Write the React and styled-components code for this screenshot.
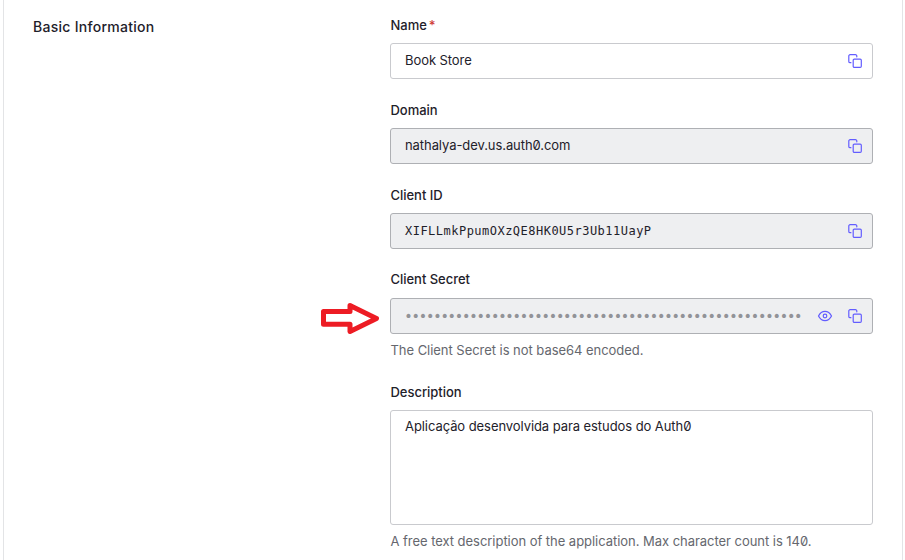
import React from "react";
import styled, { createGlobalStyle, css } from "styled-components";

const GlobalStyle = createGlobalStyle`
  * { box-sizing: border-box; }
  body {
    margin: 0;
    background: #fff;
    overflow: hidden;
    font-family: Inter, "Liberation Sans", sans-serif;
    font-feature-settings: "zero";
    color: #1e212a;
  }
`;

const Panel = styled.main`
  display: flex;
  width: 900px;
  height: 560px;
  margin-left: 3px;
  border: solid #e3e4e6;
  border-width: 0 1px;
  overflow: hidden;
`;

const SectionTitle = styled.h2`
  flex: 0 0 357px;
  margin: 17px 0 0 29px;
  font-size: 14px;
  line-height: 20px;
  font-weight: 500;
  letter-spacing: 0.28px;
`;

const Form = styled.form`
  flex: 0 0 483px;
  padding-top: 15px;
`;

const Field = styled.div`
  position: relative;
  margin-bottom: ${(p) => p.$gap}px;
`;

const Label = styled.label`
  display: block;
  height: 20px;
  margin-bottom: ${(p) => p.$space || 8}px;
  padding-left: 0.5px;
  font-size: 13px;
  line-height: 20px;
  font-weight: 500;
  letter-spacing: -0.03px;
`;

const Required = styled.span`
  margin-left: 2px;
  color: #d03c38;
`;

const Control = styled.div`
  display: flex;
  align-items: center;
  height: 36px;
  padding: 0 9px 0 14px;
  border: 1px solid ${(p) => (p.$readOnly ? "#aeb0b4" : "#c9cace")};
  border-radius: 3px;
  background: ${(p) => (p.$readOnly ? "#eeeff1" : "#fff")};
`;

const Value = styled.span`
  flex: 1;
  padding-bottom: 2px;
  font-size: 13px;
  line-height: 20px;
  white-space: nowrap;
  letter-spacing: -0.07px;
  ${(p) =>
    p.$mono &&
    css`
      padding-bottom: 0;
      font-family: "DejaVu Sans Mono", "Liberation Mono", monospace;
      font-size: 12px;
      letter-spacing: 0.48px;
    `}
`;

const Secret = styled.span`
  flex: 1;
  margin-left: -0.7px;
  font-family: "DejaVu Sans Mono", monospace;
  font-size: 14px;
  line-height: 20px;
  letter-spacing: -1.21px;
  white-space: nowrap;
  color: #929398;
`;

const IconButton = styled.button`
  display: flex;
  margin: 0 0 0 14px;
  padding: 0;
  border: 0;
  background: none;
  color: #635dff;
`;

const TextArea = styled.div`
  height: 115px;
  padding: 5px 14px;
  border: 1px solid #c9cace;
  border-radius: 3px;
  display: flex;
  align-items: flex-start;
`;

const Hint = styled.p`
  margin: 6px 0 0 0.5px;
  height: 20px;
  font-size: 13px;
  line-height: 20px;
  color: #65676e;
  letter-spacing: -0.04px;
`;

const Arrow = styled.svg`
  position: absolute;
  left: -72px;
  top: 23px;
`;

const CopyIcon = () => (
  <svg width="16" height="16" viewBox="0 0 16 16" fill="none" stroke="currentColor" strokeWidth="1.2" strokeLinecap="round" strokeLinejoin="round">
    <path d="M3.9 9.7H3.1A1.3 1.3 0 0 1 1.8 8.4V3A1.3 1.3 0 0 1 3.1 1.7H8.5A1.3 1.3 0 0 1 9.8 3V3.8" />
    <rect x="6.2" y="6.2" width="8.1" height="8.1" rx="1.1" />
  </svg>
);

const EyeIcon = () => (
  <svg width="16" height="16" viewBox="0 0 16 16" fill="none" stroke="currentColor" strokeWidth="1.2" strokeLinejoin="round">
    <path d="M1.5 8S3.8 3.4 8 3.4 14.5 8 14.5 8 12.2 12.6 8 12.6 1.5 8 1.5 8Z" />
    <circle cx="8" cy="8" r="1.8" />
  </svg>
);

const CopyButton = () => (
  <IconButton type="button" aria-label="Copy">
    <CopyIcon />
  </IconButton>
);

export default function App() {
  return (
    <>
      <GlobalStyle />
      <Panel>
        <SectionTitle>Basic Information</SectionTitle>
        <Form>
          <Field $gap={21}>
            <Label>Name<Required>*</Required></Label>
            <Control>
              <Value>Book Store</Value>
              <CopyButton />
            </Control>
          </Field>
          <Field $gap={21}>
            <Label>Domain</Label>
            <Control $readOnly>
              <Value>nathalya-dev.us.auth0.com</Value>
              <CopyButton />
            </Control>
          </Field>
          <Field $gap={20}>
            <Label>Client ID</Label>
            <Control $readOnly>
              <Value $mono>XIFLLmkPpumOXzQE8HK0U5r3Ub11UayP</Value>
              <CopyButton />
            </Control>
          </Field>
          <Field $gap={22}>
            <Label $space={9}>Client Secret</Label>
            <Control $readOnly>
              <Secret>{"•".repeat(55)}</Secret>
              <IconButton type="button" aria-label="Reveal">
                <EyeIcon />
              </IconButton>
              <CopyButton />
            </Control>
            <Hint>The Client Secret is not base64 encoded.</Hint>
            <Arrow width="64" height="50" viewBox="0 0 64 50" fill="none" stroke="#ed1c24" strokeWidth="5" strokeLinejoin="round">
              <path d="M5.5 19.4H32V13.4L58.5 26.5L32 39.5V32.2H5.5Z" />
            </Arrow>
          </Field>
          <Field $gap={0}>
            <Label>Description</Label>
            <TextArea>
              <Value>Aplicação desenvolvida para estudos do Auth0</Value>
            </TextArea>
            <Hint>A free text description of the application. Max character count is 140.</Hint>
          </Field>
        </Form>
      </Panel>
    </>
  );
}
